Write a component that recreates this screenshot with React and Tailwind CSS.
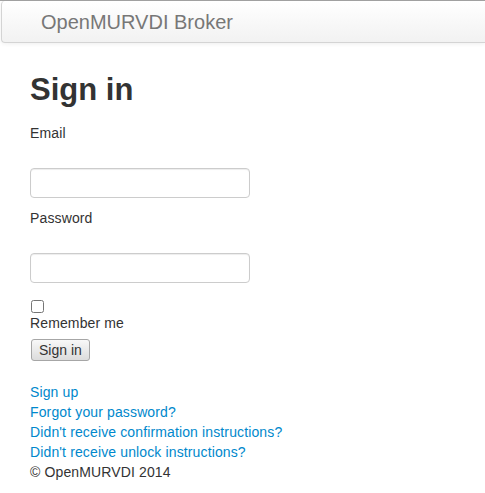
function NavBar() {
  return (
    <div className="border-t border-[#a3a3a3]">
      <div className="ml-px h-[42px] border-l border-b border-[#d4d4d4] rounded-tl-[4px] rounded-bl-[4px] bg-gradient-to-b from-white to-[#f2f2f2] shadow-[0_1px_4px_rgba(0,0,0,0.065)] pl-[39px] pt-[11px]">
        <a href="#" className="block text-[20px] leading-5 tracking-normal text-[#777777]">
          OpenMURVDI Broker
        </a>
      </div>
    </div>
  )
}

function Field({ label, type }) {
  return (
    <div>
      <label className="block leading-5">{label}</label>
      <input
        type={type}
        className="mt-[25px] block h-[30px] w-[220px] rounded-[4px] border border-[#cccccc] bg-white px-[6px] shadow-[inset_0_1px_1px_rgba(0,0,0,0.075)] outline-none"
      />
    </div>
  )
}

const links = [
  "Sign up",
  "Forgot your password?",
  "Didn't receive confirmation instructions?",
  "Didn't receive unlock instructions?",
]

export default function App() {
  return (
    <div className="min-h-[493px] bg-white font-['Liberation_Sans',Arial,sans-serif] text-[14px] tracking-[0.13px] text-[#333333]">
      <NavBar />
      <div className="px-[30px]">
        <h1 className="mt-[29px] text-[31px] font-bold leading-[36px] tracking-normal text-[#333333]">Sign in</h1>
        <form className="mt-[15px]" onSubmit={(e) => e.preventDefault()}>
          <Field label="Email" type="email" />
          <div className="mt-[10px]">
            <Field label="Password" type="password" />
          </div>
          <input type="checkbox" className="mt-[17px] ml-px block h-[13px] w-[13px] m-0" />
          <label className="block leading-5">Remember me</label>
          <button
            type="submit"
            className="mt-[6px] ml-px block h-[22px] rounded-[3px] border border-[#a6a6a6] bg-gradient-to-b from-[#f8f8f8] to-[#dcdcdc] px-[7px] text-[14px] leading-[18px] tracking-normal text-[#333333]"
          >
            Sign in
          </button>
        </form>
        <div className="mt-[21px]">
          {links.map((text) => (
            <a key={text} href="#" className="block leading-5 text-[#0088cc]">
              {text}
            </a>
          ))}
        </div>
        <p className="leading-5">© OpenMURVDI 2014</p>
      </div>
    </div>
  )
}
